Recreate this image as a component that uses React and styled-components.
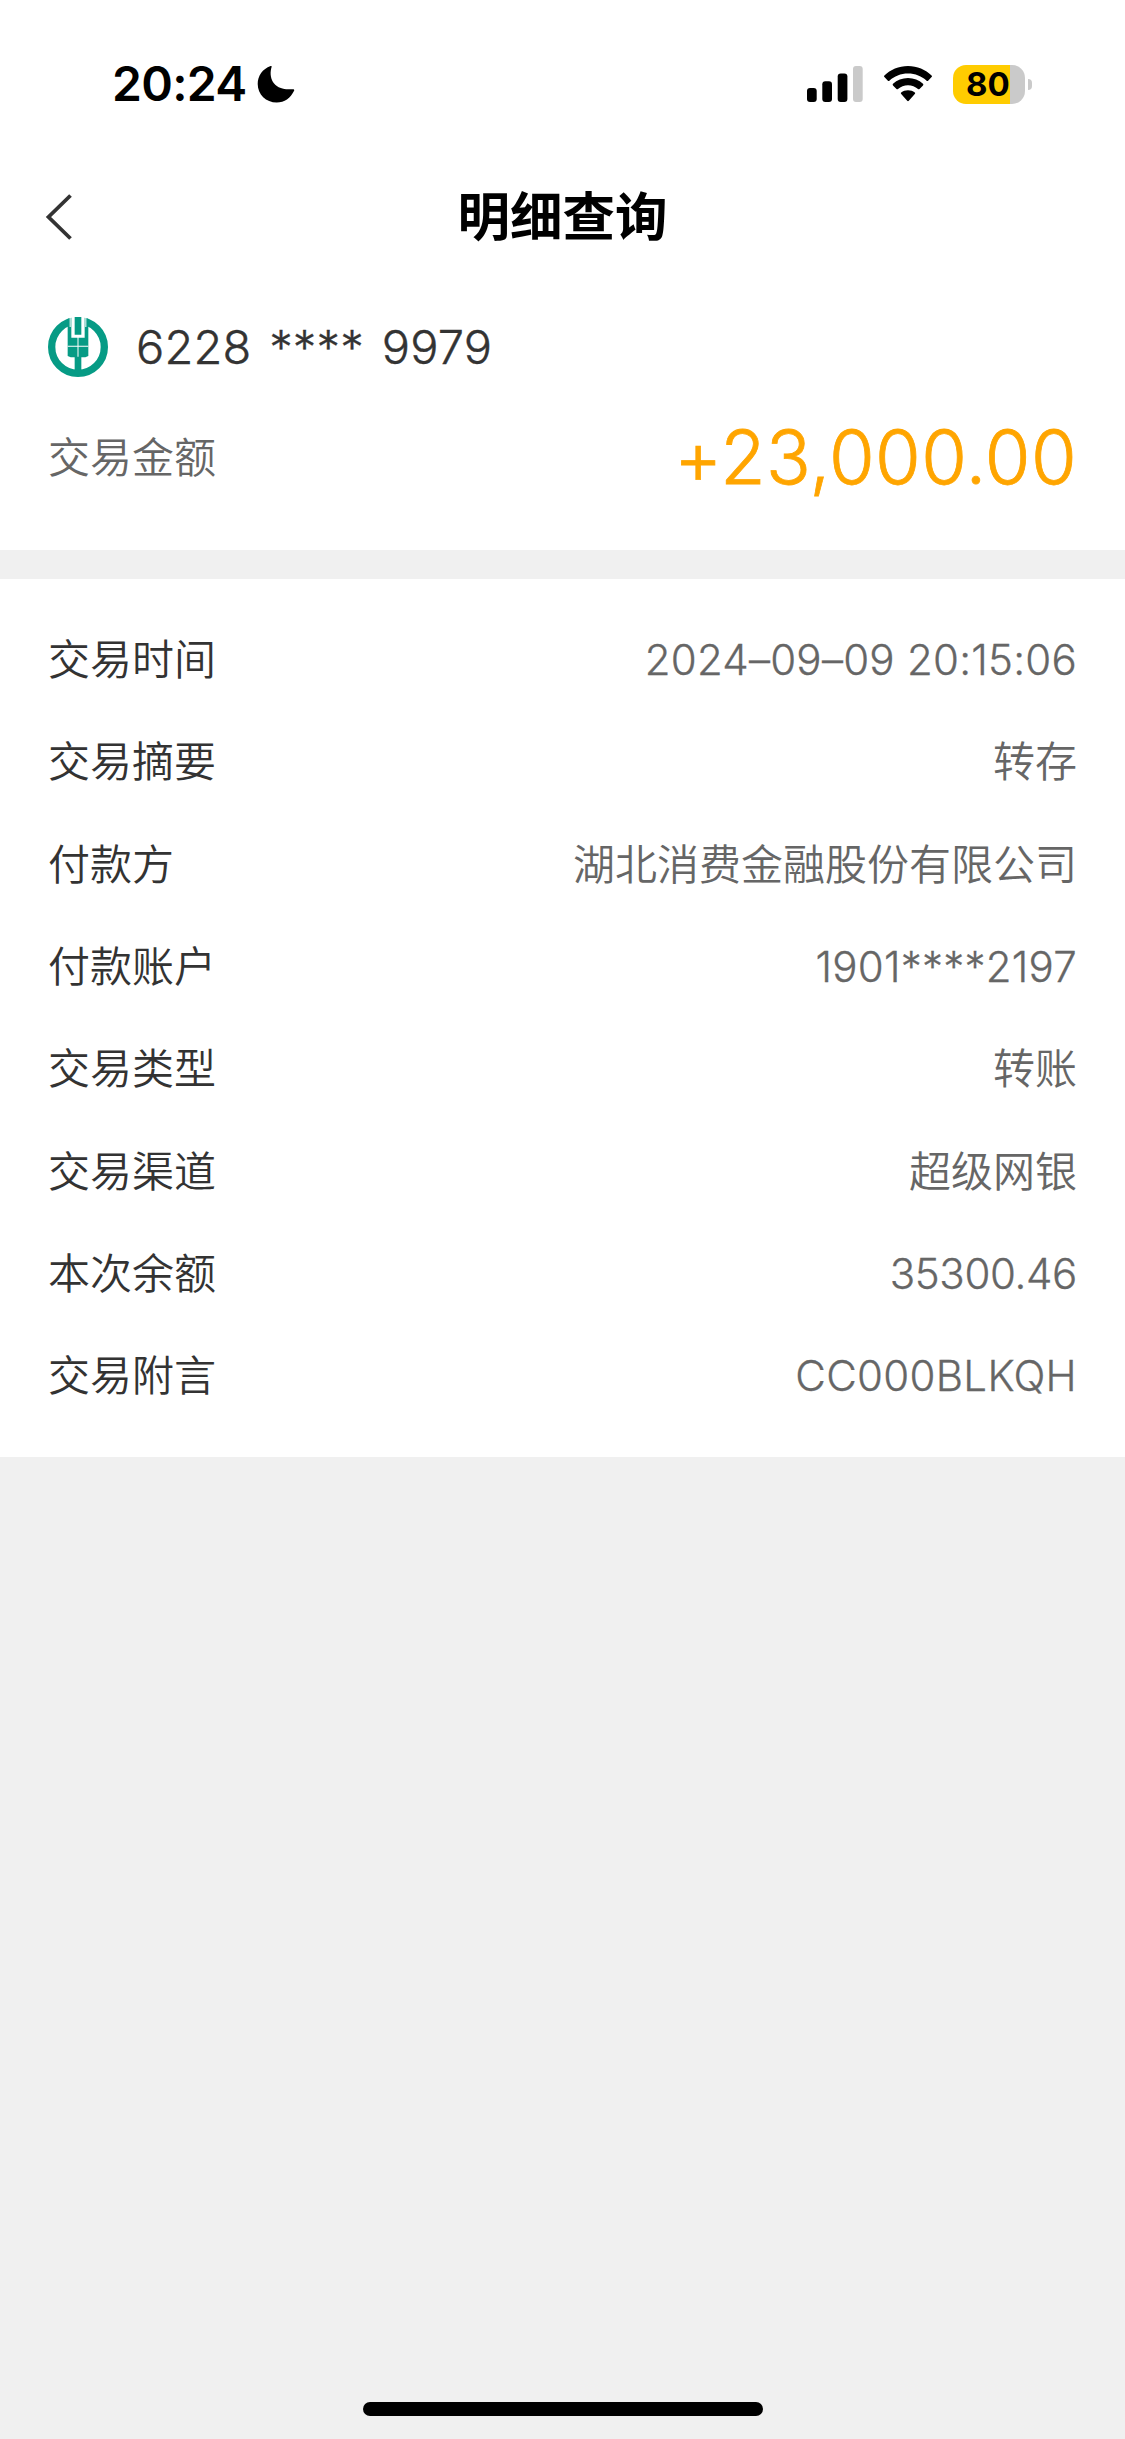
import React from "react";
import styled, {createGlobalStyle} from "styled-components";


const details = [
    {label: "交易时间", value: "2024–09–09 20:15:06", spacing: "0.25px"},
    {label: "交易摘要", value: "转存"},
    {label: "付款方", value: "湖北消费金融股份有限公司"},
    {label: "付款账户", value: "1901****2197", spacing: "0.25px"},
    {label: "交易类型", value: "转账"},
    {label: "交易渠道", value: "超级网银"},
    {label: "本次余额", value: "35300.46", spacing: "-0.35px"},
    {label: "交易附言", value: "CC000BLKQH", spacing: "0.3px"},
];

const App = () => {
    return(
        <>
            <GlobalStyle />
            <Page>
                <StatusBar>
                    <Clock>20:24</Clock>
                    <Moon />
                    <StatusIcons>
                        <Signal />
                        <Wifi />
                        <Battery>
                            <Level>80</Level>
                            <Tip />
                        </Battery>
                    </StatusIcons>
                </StatusBar>
                <Header>
                    <BackButton aria-label="返回">
                        <svg width="28" height="46" viewBox="0 0 28 46" fill="none" stroke="#333" strokeWidth="3.8">
                            <path d="M25.500 1.500 3.500 23l22 21.500" />
                        </svg>
                    </BackButton>
                    <Title>明细查询</Title>
                </Header>
                <Summary>
                    <Account>
                        <BankLogo />
                        <CardNumber>6228 **** 9979</CardNumber>
                    </Account>
                    <AmountRow>
                        <AmountLabel>交易金额</AmountLabel>
                        <Amount>+23,000.00</Amount>
                    </AmountRow>
                </Summary>
                <Details>
                    {details.map((item) => (
                        <Row key={item.label}>
                            <Label>{item.label}</Label>
                            <Value $spacing={item.spacing}>{item.value}</Value>
                        </Row>
                    ))}
                </Details>
                <HomeIndicator />
            </Page>
        </>
    )
}

//Icons
const Moon = () => (
    <svg width="38" height="38" viewBox="0 0 38 38">
        <path d="M13.600 1.100C14.200.7 14.900 1.200 14.600 2 11.500 12 15.500 26 35.600 24.200c1.400-.1 2 .5 1.500 1.500C33.500 33 27.500 37.500 19.700 37.500 9 37.500.7 29.500.7 19 .7 11 5.500 4 13.600 1.100Z" fill="#000" />
    </svg>
)

const Signal = () => (
    <svg width="56" height="36" viewBox="0 0 56 36">
        <rect x="0" y="22" width="9.700" height="14" rx="3" />
        <rect x="15.300" y="15.300" width="9.700" height="20.700" rx="3" />
        <rect x="30.700" y="7.500" width="9.700" height="28.500" rx="3" />
        <rect x="46" y="0" width="9.700" height="36" rx="3" fill="#cacaca" />
    </svg>
)

const Wifi = () => (
    <svg width="48" height="36" viewBox="0 0 48 36">
        <path d="M24 0C14.800 0 6.400 3.600.4 9.500c-.5.500-.5 1 0 1.500l3.500 3.700c.4.500 1 .5 1.500 0C10.200 10.200 16.800 7.500 24 7.500s13.800 2.700 18.600 7.200c.5.500 1.100.5 1.500 0l3.500-3.700c.5-.5.5-1 0-1.500C41.600 3.600 33.200 0 24 0Z" />
        <path d="M24 12c-5.800 0-11 2.200-15 5.800-.5.500-.5 1.100 0 1.600l3.500 3.500c.5.500 1 .5 1.500 0 2.700-2.300 6.200-3.700 10-3.700s7.300 1.400 10 3.700c.5.500 1 .5 1.500 0l3.500-3.500c.5-.5.5-1.100 0-1.600-4-3.600-9.200-5.800-15-5.800Z" />
        <path d="M24 24.200c-2.600 0-4.900.9-6.800 2.300-.5.400-.5 1 0 1.500l6 6.800c.5.500 1.100.5 1.600 0l6-6.800c.5-.5.5-1.100 0-1.500-1.900-1.400-4.200-2.300-6.800-2.300Z" />
    </svg>
)

const BankLogo = () => (
    <svg width="60" height="60" viewBox="0 0 180 180">
        <circle cx="90" cy="90" r="79" fill="none" stroke="#069b85" strokeWidth="22" />
        <path fill="#fff" d="M65 0h50v40H65z" />
        <path fill="#069b85" d="M59 5 70 2v60h40V2l11 3v112l-9 4H68l-9-4z" />
        <path fill="#fff" d="M73 0h34v59H73z" />
        <path fill="#fff" d="M65 0h3v30h-3zM112 0h3v30h-3z" />
        <path fill="#069b85" d="M80 0h20v53H80zM80 118h20v50H80z" />
        <path fill="#fff" d="M88.500 59h3v60h-3zM59 86h62v3H59z" />
    </svg>
)

//Styles
const GlobalStyle = createGlobalStyle`
    *{
        box-sizing: border-box;
    }
    body{
        margin: 0;
        background: #f0f0f0;
        font-family: Inter, "Noto Sans CJK SC", sans-serif;
    }
`

const Page = styled.div`
    display: flex;
    flex-direction: column;
    height: 2439px;
    background: #f0f0f0;
`

const StatusBar = styled.div`
    display: flex;
    align-items: center;
    height: 168px;
    padding: 0 93px 0 112px;
    background: white;
`

const Clock = styled.span`
    width: 145px;
    font-size: 48px;
    font-weight: 600;
    line-height: 60px;
    letter-spacing: -0.7px;
`

const StatusIcons = styled.div`
    display: flex;
    align-items: center;
    margin-left: auto;
    svg:first-child{
        margin-right: 21px;
    }
    svg:nth-child(2){
        margin-right: 21px;
    }
`

const Battery = styled.div`
    display: flex;
    align-items: center;
    gap: 3px;
`

const Level = styled.div`
    width: 72px;
    height: 39px;
    padding-left: 13px;
    border-radius: 13px;
    background: linear-gradient(to right, #ffcc00 57px, #cacaca 57px);
    font-size: 33px;
    font-weight: 700;
    line-height: 39px;
`

const Tip = styled.div`
    width: 4px;
    height: 11px;
    border-radius: 0 5px 5px 0;
    background: #cacaca;
`

const Header = styled.div`
    display: grid;
    grid-template-columns: 80px 1fr 80px;
    align-items: center;
    height: 98px;
    padding: 0 45px;
    background: white;
`

const BackButton = styled.button`
    display: flex;
    padding: 0;
    border: 0;
    background: none;
`

const Title = styled.h1`
    margin: 0;
    text-align: center;
    font-size: 52.500px;
    font-weight: 600;
    line-height: 80px;
`

const Summary = styled.div`
    height: 284px;
    padding: 51px 48px 0;
    background: white;
`

const Account = styled.div`
    display: flex;
    align-items: center;
    gap: 28px;
    height: 60px;
`

const CardNumber = styled.span`
    color: #333;
    font-size: 47px;
    font-weight: 300;
    line-height: 60px;
    letter-spacing: 0.15px;
    word-spacing: 4.500px;
    -webkit-text-stroke: 0.4px currentColor;
`

const AmountRow = styled.div`
    display: flex;
    align-items: center;
    justify-content: space-between;
    height: 100px;
    margin-top: 30px;
`

const AmountLabel = styled.span`
    padding-top: 2px;
    color: #666;
    font-size: 42px;
    font-weight: 350;
    line-height: 60px;
`

const Amount = styled.span`
    color: #ffa500;
    font-size: 74px;
    font-weight: 300;
    line-height: 100px;
    letter-spacing: 0.4px;
    -webkit-text-stroke: 0.8px currentColor;
`

const Details = styled.div`
    height: 878px;
    margin-top: 29px;
    padding: 30px 48px 0;
    background: white;
`

const Row = styled.div`
    display: flex;
    align-items: center;
    justify-content: space-between;
    height: 102.300px;
    font-size: 42px;
    line-height: 60px;
`

const Label = styled.span`
    color: #333;
    font-weight: 350;
`

const Value = styled.span`
    color: #666;
    font-weight: 350;
    letter-spacing: ${({$spacing}) => $spacing || "0"};
    -webkit-text-stroke: ${({$spacing}) => $spacing ? "0.3px currentColor" : "0"};
`

const HomeIndicator = styled.div`
    width: 400px;
    height: 14px;
    margin: auto auto 23px;
    border-radius: 7px;
    background: black;
`


export default App;
